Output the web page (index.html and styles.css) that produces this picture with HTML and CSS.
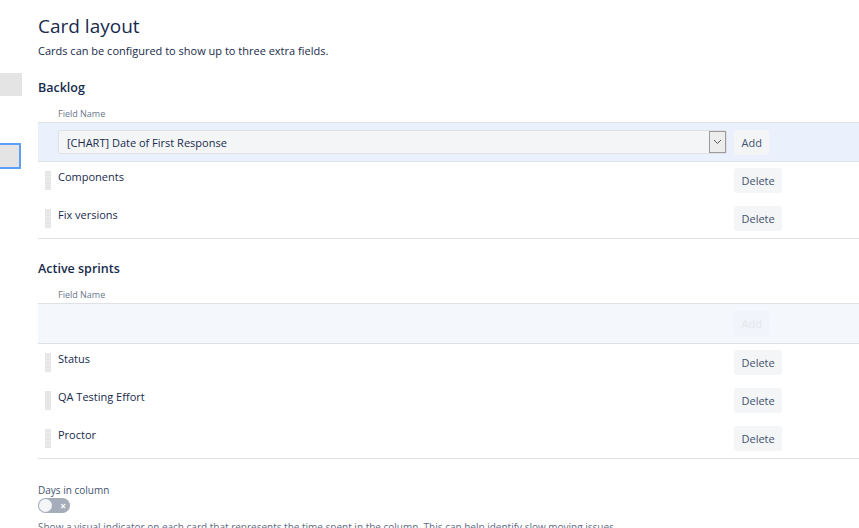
FILE: index.html
```html
<!DOCTYPE html>
<html lang="en">
<head>
<meta charset="utf-8">
<title>Card layout</title>
<link rel="stylesheet" href="styles.css">
</head>
<body>
<div class="page">
  <aside class="side">
    <div class="side-item"></div>
    <div class="side-item focused"></div>
  </aside>
  <main class="main">
    <h1 class="title">Card layout</h1>
    <p class="intro">Cards can be configured to show up to three extra fields.</p>

    <section class="group">
      <h2 class="group-title">Backlog</h2>
      <div class="table">
        <div class="head"><span></span><span class="head-label">Field Name</span><span></span></div>
        <div class="add-row">
          <span></span>
          <div class="select">
            <span class="select-value">[CHART] Date of First Response</span>
            <span class="select-arrow"><svg width="9" height="6" viewBox="0 0 9 6"><path d="M1 1l3.5 3.5L8 1" fill="none" stroke="#555" stroke-width="1"/></svg></span>
          </div>
          <div class="cell-btn"><button class="btn">Add</button></div>
        </div>
        <div class="row"><span class="grip"></span><span class="name">Components</span><div class="cell-btn"><button class="btn">Delete</button></div></div>
        <div class="row"><span class="grip"></span><span class="name">Fix versions</span><div class="cell-btn"><button class="btn">Delete</button></div></div>
      </div>
    </section>

    <section class="group">
      <h2 class="group-title">Active sprints</h2>
      <div class="table">
        <div class="head"><span></span><span class="head-label">Field Name</span><span></span></div>
        <div class="add-row empty">
          <span></span>
          <span></span>
          <div class="cell-btn"><button class="btn disabled">Add</button></div>
        </div>
        <div class="row"><span class="grip"></span><span class="name">Status</span><div class="cell-btn"><button class="btn">Delete</button></div></div>
        <div class="row"><span class="grip dotted"></span><span class="name">QA Testing Effort</span><div class="cell-btn"><button class="btn">Delete</button></div></div>
        <div class="row"><span class="grip"></span><span class="name">Proctor</span><div class="cell-btn"><button class="btn">Delete</button></div></div>
      </div>
    </section>

    <section class="days">
      <div class="days-label">Days in column</div>
      <div class="toggle"><span class="knob"></span><span class="x">×</span></div>
      <p class="days-desc">Show a visual indicator on each card that represents the time spent in the column. This can help identify slow moving issues.</p>
    </section>
  </main>
</div>
</body>
</html>
```

FILE: styles.css
```css
html, body {
  margin: 0;
  padding: 0;
  background: #fff;
  overflow: hidden;
}
body {
  font-family: "Open Sans", "Noto Sans", sans-serif;
  color: #172b4d;
  font-size: 11px;
}
.page {
  display: flex;
  width: 960px;
}
.side {
  width: 23px;
  flex: none;
  display: flex;
  flex-direction: column;
  padding-top: 73px;
}
.side-item {
  width: 22px;
  height: 23px;
  background: #e4e4e4;
}
.side-item.focused {
  margin-top: 47px;
  width: 19px;
  height: 22px;
  border: 2px solid #5aa0f6;
  border-left: none;
  background: #e4e4e4;
}
.main {
  margin-left: 15px;
  flex: 1;
}
.title {
  margin: 14px 0 0;
  font-size: 19px;
  font-weight: 400;
  line-height: 24px;
  color: #172b4d;
}
.intro {
  margin: 5px 0 0;
  font-size: 11px;
  line-height: 16px;
}
.group {
  margin-top: 20px;
}
.group + .group {
  margin-top: 21px;
}
.group-title {
  margin: 0;
  font-size: 12.5px;
  font-weight: 600;
  line-height: 18px;
}
.table {
  border-bottom: 1px solid #dfe1e6;
}
.head, .add-row, .row {
  display: grid;
  grid-template-columns: 13px 669px 1fr;
  column-gap: 7px;
  align-items: center;
}
.head {
  height: 18px;
  margin-top: 7px;
}
.head-label {
  font-size: 9px;
  color: #6b778c;
}
.add-row {
  height: 38px;
  background: #eaf1fc;
  border-top: 1px solid #dfe1e6;
  border-bottom: 1px solid #dfe1e6;
}
.add-row.empty {
  background: #f4f7fc;
  height: 39px;
}
.select {
  height: 22px;
  background: #f4f5f7;
  border: 1px solid #dfe1e6;
  border-radius: 2px;
  display: flex;
  align-items: center;
  justify-content: space-between;
}
.select-value {
  padding-left: 8px;
  font-size: 11px;
}
.select-arrow {
  width: 15px;
  height: 20px;
  border: 1px solid #9a9a9a;
  background: #ededed;
  display: flex;
  align-items: center;
  justify-content: center;
}
.cell-btn {
  display: flex;
  margin-top: -2px;
}
.btn {
  font-family: inherit;
  font-size: 11px;
  color: #42526e;
  background: #f4f5f7;
  border: none;
  border-radius: 3px;
  height: 25px;
  padding: 0 7.5px;
  line-height: 25px;
}
.btn.disabled {
  color: #e6e8ec;
  background: #f1f4fa;
}
.add-row .cell-btn {
  margin-top: 0;
}
.row {
  height: 38px;
}
.grip {
  justify-self: start;
  margin-left: 7px;
  margin-top: -2px;
  width: 6px;
  height: 19px;
  background: repeating-linear-gradient(to bottom, #e2e2e2 0 1px, #ececec 1px 2px);
}
.grip.dotted {
  background: radial-gradient(circle, #c8c8c8 0.6px, transparent 0.8px) 0 0 / 2px 2px;
}
.name {
  font-size: 11px;
  margin-top: -10px;
}
.days {
  margin-top: 25px;
}
.days-label {
  font-size: 10px;
  line-height: 13px;
  color: #42526e;
}
.toggle {
  margin-top: 1px;
  width: 32px;
  height: 15px;
  border-radius: 8px;
  background: #a5adba;
  display: flex;
  align-items: center;
  justify-content: space-between;
  box-sizing: border-box;
  padding: 0 4px 0 1px;
}
.knob {
  width: 13px;
  height: 13px;
  border-radius: 50%;
  background: #f4f5f7;
}
.x {
  color: #fff;
  font-size: 10px;
  font-weight: 700;
  line-height: 1;
}
.days-desc {
  margin: 7px 0 0;
  font-size: 10px;
  color: #5e6c84;
}
```
